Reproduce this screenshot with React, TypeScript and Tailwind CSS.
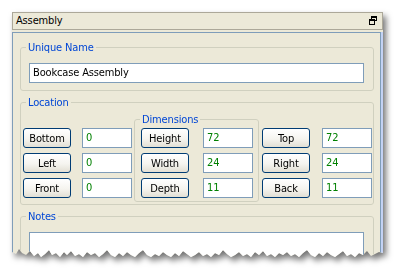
const tornEdge: [number, number][] = [
  [0, 240], [4, 242], [7, 237], [10, 241], [14, 243], [18, 239], [22, 244], [26, 241], [29, 245], [33, 242],
  [37, 238], [40, 243], [44, 241], [48, 245], [52, 240], [55, 243], [59, 239], [63, 244], [67, 242], [71, 245],
  [75, 240], [79, 243], [83, 241], [87, 245], [91, 242], [95, 238], [99, 243], [103, 245], [107, 241], [111, 244],
  [115, 240], [119, 243], [123, 245], [127, 241], [131, 238], [135, 243], [139, 245], [143, 242], [147, 244], [151, 240],
  [155, 243], [159, 245], [163, 241], [167, 244], [171, 239], [175, 242], [179, 245], [183, 243], [187, 240], [191, 244],
  [195, 242], [199, 245], [203, 241], [207, 243], [211, 238], [215, 242], [219, 245], [223, 243], [227, 240], [231, 244],
  [235, 242], [239, 245], [243, 240], [247, 243], [251, 239], [255, 244], [259, 242], [263, 245], [267, 241], [271, 243],
  [275, 240], [279, 244], [283, 242], [287, 245], [291, 241], [295, 238], [299, 243], [303, 245], [307, 241], [311, 244],
  [315, 240], [319, 243], [323, 245], [327, 242], [331, 239], [335, 244], [339, 242], [343, 245], [347, 241], [351, 243],
  [355, 239], [359, 244], [363, 242], [367, 240], [371, 241],
];

const clipPath =
  'polygon(0px 0px, 371px 0px, ' +
  [...tornEdge].reverse().map(([x, y]) => `${x}px ${y}px`).join(', ') +
  ')';

function XpButton({ label }: { label: string }) {
  return (
    <button className="h-[20px] w-[48px] rounded-[3px] border border-[#003C74] bg-[linear-gradient(180deg,#ffffff_0%,#f5f4ef_55%,#e2dfd4_100%)] text-[11px] leading-none text-black">
      {label}
    </button>
  );
}

function NumBox({ value }: { value: string }) {
  return (
    <div className="flex h-[20px] w-[50px] items-center border border-[#7F9DB9] bg-white pl-[3px] text-[#008000]">
      {value}
    </div>
  );
}

function Row({ label, value, gap }: { label: string; value: string; gap: string }) {
  return (
    <div className={`flex items-center ${gap}`}>
      <XpButton label={label} />
      <NumBox value={value} />
    </div>
  );
}

function RestoreIcon() {
  return (
    <svg width="9" height="10" viewBox="0 0 9 10" shapeRendering="crispEdges">
      <path d="M2 0h6v1H2zM2 1h6v1H2zM2 2h1v1H2zM7 2h1v3H7zM6 4h2v1H6z" fill="#000" />
      <path d="M0 3h6v1H0zM0 4h6v1H0zM0 5h1v4H0zM5 5h1v4H5zM0 8h6v1H0z" fill="#000" />
    </svg>
  );
}

export default function App() {
  return (
    <div className="h-[276px] w-[394px] bg-white pl-[12px] pt-[12px] font-['DejaVu_Sans_Condensed','Liberation_Sans',sans-serif] text-[11px] tracking-[-0.15px] text-black">
      <div className="w-[371px] [filter:drop-shadow(3px_4px_3px_rgba(0,0,0,0.55))]">
        <div className="flex h-[246px] flex-col bg-[#ECE9D8]" style={{ clipPath }}>
          {/* title bar */}
          <div className="flex h-[18px] items-center justify-between border border-[#ACA899] pl-[3px] pr-[4px]">
            <span>Assembly</span>
            <RestoreIcon />
          </div>

          <div className="mt-[2px] flex flex-1 overflow-hidden">
            <div className="flex-1 border-b border-l border-t border-[#7F9DB9] pl-[7px] pt-[8px]">
              <fieldset className="w-[354px] rounded-[3px] border border-[#D0D0BF] pb-[7px]">
                <legend className="ml-[5px] px-[2px] leading-[13px] text-[#0046D5]">Unique Name</legend>
                <div className="ml-[8px] mt-[9px] flex h-[20px] w-[335px] items-center border border-[#7F9DB9] bg-white pl-[3px]">
                  Bookcase Assembly
                </div>
              </fieldset>

              <fieldset className="mt-[5px] w-[354px] rounded-[3px] border border-[#D0D0BF] pb-[2px]">
                <legend className="ml-[5px] px-[2px] leading-[13px] text-[#0046D5]">Location</legend>
                <div className="flex items-start">
                  <div className="ml-[2px] mt-[19px] flex flex-col gap-[5px]">
                    <Row label="Bottom" value="0" gap="gap-[11px]" />
                    <Row label="Left" value="0" gap="gap-[11px]" />
                    <Row label="Front" value="0" gap="gap-[11px]" />
                  </div>

                  <fieldset className="ml-[2px] mt-[4px] w-[125px] rounded-[3px] border border-[#D0D0BF] pb-[3px] pl-[6px]">
                    <legend className="ml-[-1px] px-[2px] leading-[13px] text-[#0046D5]">Dimensions</legend>
                    <div className="mt-[2px] flex flex-col gap-[5px]">
                      <Row label="Height" value="72" gap="gap-[14px]" />
                      <Row label="Width" value="24" gap="gap-[14px]" />
                      <Row label="Depth" value="11" gap="gap-[14px]" />
                    </div>
                  </fieldset>

                  <div className="ml-[3px] mt-[19px] flex flex-col gap-[5px]">
                    <Row label="Top" value="72" gap="gap-[12px]" />
                    <Row label="Right" value="24" gap="gap-[12px]" />
                    <Row label="Back" value="11" gap="gap-[12px]" />
                  </div>
                </div>
              </fieldset>

              <fieldset className="mt-[5px] h-[80px] w-[354px] rounded-[3px] border border-[#D0D0BF]">
                <legend className="ml-[5px] px-[2px] leading-[13px] text-[#0046D5]">Notes</legend>
                <div className="ml-[8px] mt-[9px] h-[60px] w-[335px] border border-[#7F9DB9] bg-white" />
              </fieldset>
            </div>
            <div className="w-[1px] bg-[#7F9DB9]" />
            <div className="w-[2px] bg-[#C3D2F4]" />
          </div>
        </div>
      </div>
    </div>
  );
}
